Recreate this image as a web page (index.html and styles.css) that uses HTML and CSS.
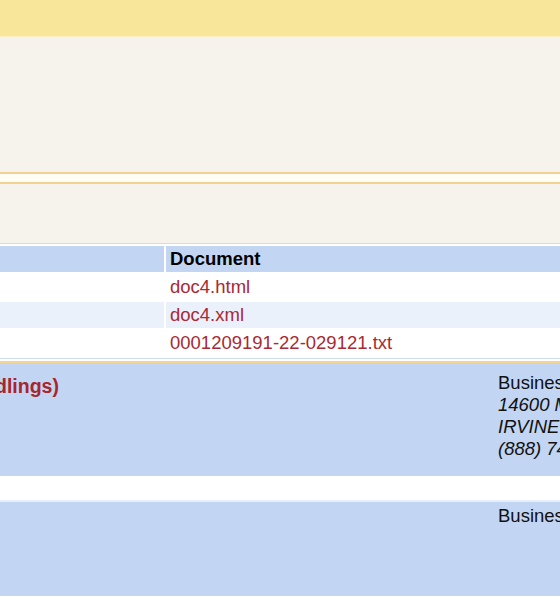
FILE: index.html
```html
<!DOCTYPE html>
<html>
<head>
<meta charset="utf-8">
<link rel="stylesheet" href="styles.css">
</head>
<body>
<div class="page">
  <div class="topbar"></div>
  <div class="info"></div>
  <div class="rule"></div>
  <div class="info info-short"></div>
  <div class="table-wrap">
    <table class="doc-table">
      <tr class="head"><th class="c1"></th><th class="c2">Document</th></tr>
      <tr><td class="c1"></td><td class="c2"><a href="#">doc4.html</a></td></tr>
      <tr class="alt"><td class="c1"></td><td class="c2"><a href="#">doc4.xml</a></td></tr>
      <tr><td class="c1"></td><td class="c2"><a href="#">0001209191-22-029121.txt</a></td></tr>
    </table>
  </div>
  <div class="filer-sep"></div>
  <div class="filer">
    <div class="company"><span class="company-name">dlings)</span></div>
    <div class="mailer">
      <div>Business Address</div>
      <div class="addr">14600 MYFORD ROAD</div>
      <div class="addr">IRVINE CA 92606</div>
      <div class="addr">(888) 744-6000</div>
    </div>
  </div>
  <div class="gap"></div>
  <div class="filer filer-2">
    <div class="company"></div>
    <div class="mailer">
      <div>Business Address</div>
    </div>
  </div>
</div>
</body>
</html>
```

FILE: styles.css
```css
html, body {
  margin: 0;
  padding: 0;
  background: #ffffff;
}
body {
  width: 560px;
  height: 600px;
  overflow: hidden;
  font-family: "Liberation Sans", Arial, sans-serif;
  font-size: 18.5px;
  color: #000;
}
.page {
  width: 560px;
}
.topbar {
  height: 36px;
  background: #f8e69a;
  border-bottom: 1px solid #fbf0c4;
}
.info {
  height: 135px;
  background: #f5f3ec;
}
.info-short {
  height: 59px;
}
.rule {
  height: 8px;
  background: #fffdf4;
  border-top: 2px solid #f2d192;
  border-bottom: 2px solid #f2d192;
}
.table-wrap {
  border-top: 1px solid #cfdcee;
  border-bottom: 1px solid #cfdcee;
  background: #ffffff;
  overflow: hidden;
}
.doc-table {
  border-collapse: separate;
  border-spacing: 2px;
  margin-left: -2px;
  width: 760px;
}
.doc-table th,
.doc-table td {
  height: 26px;
  padding: 0 0 0 4px;
  text-align: left;
  vertical-align: middle;
  line-height: 22px;
  white-space: nowrap;
}
.doc-table .c1 {
  width: 160px;
}
.doc-table .head th {
  background: #c2d5f2;
  font-weight: bold;
  color: #000;
}
.doc-table tr.alt td {
  background: #ebf1fb;
}
.doc-table a {
  color: #a82a33;
  text-decoration: none;
}
.filer-sep {
  height: 2px;
  margin-top: 2px;
  background: #f4d58f;
}
.filer {
  display: grid;
  grid-template-columns: 498px 1fr;
  height: 104px;
  padding-top: 9px;
  background: #c2d5f2;
  line-height: 22px;
  white-space: nowrap;
  overflow: hidden;
}
.company {
  overflow: hidden;
  padding-top: 3px;
}
.company-name {
  display: inline-block;
  margin-left: -5px;
  font-size: 19.5px;
  font-weight: bold;
  color: #a8242e;
}
.mailer {
  color: #111;
}
.addr {
  font-style: italic;
}
.gap {
  height: 24px;
  background: #ffffff;
  border-bottom: 2px solid #e6eef9;
}
.filer-2 {
  height: 91px;
  padding-top: 3px;
}
```
